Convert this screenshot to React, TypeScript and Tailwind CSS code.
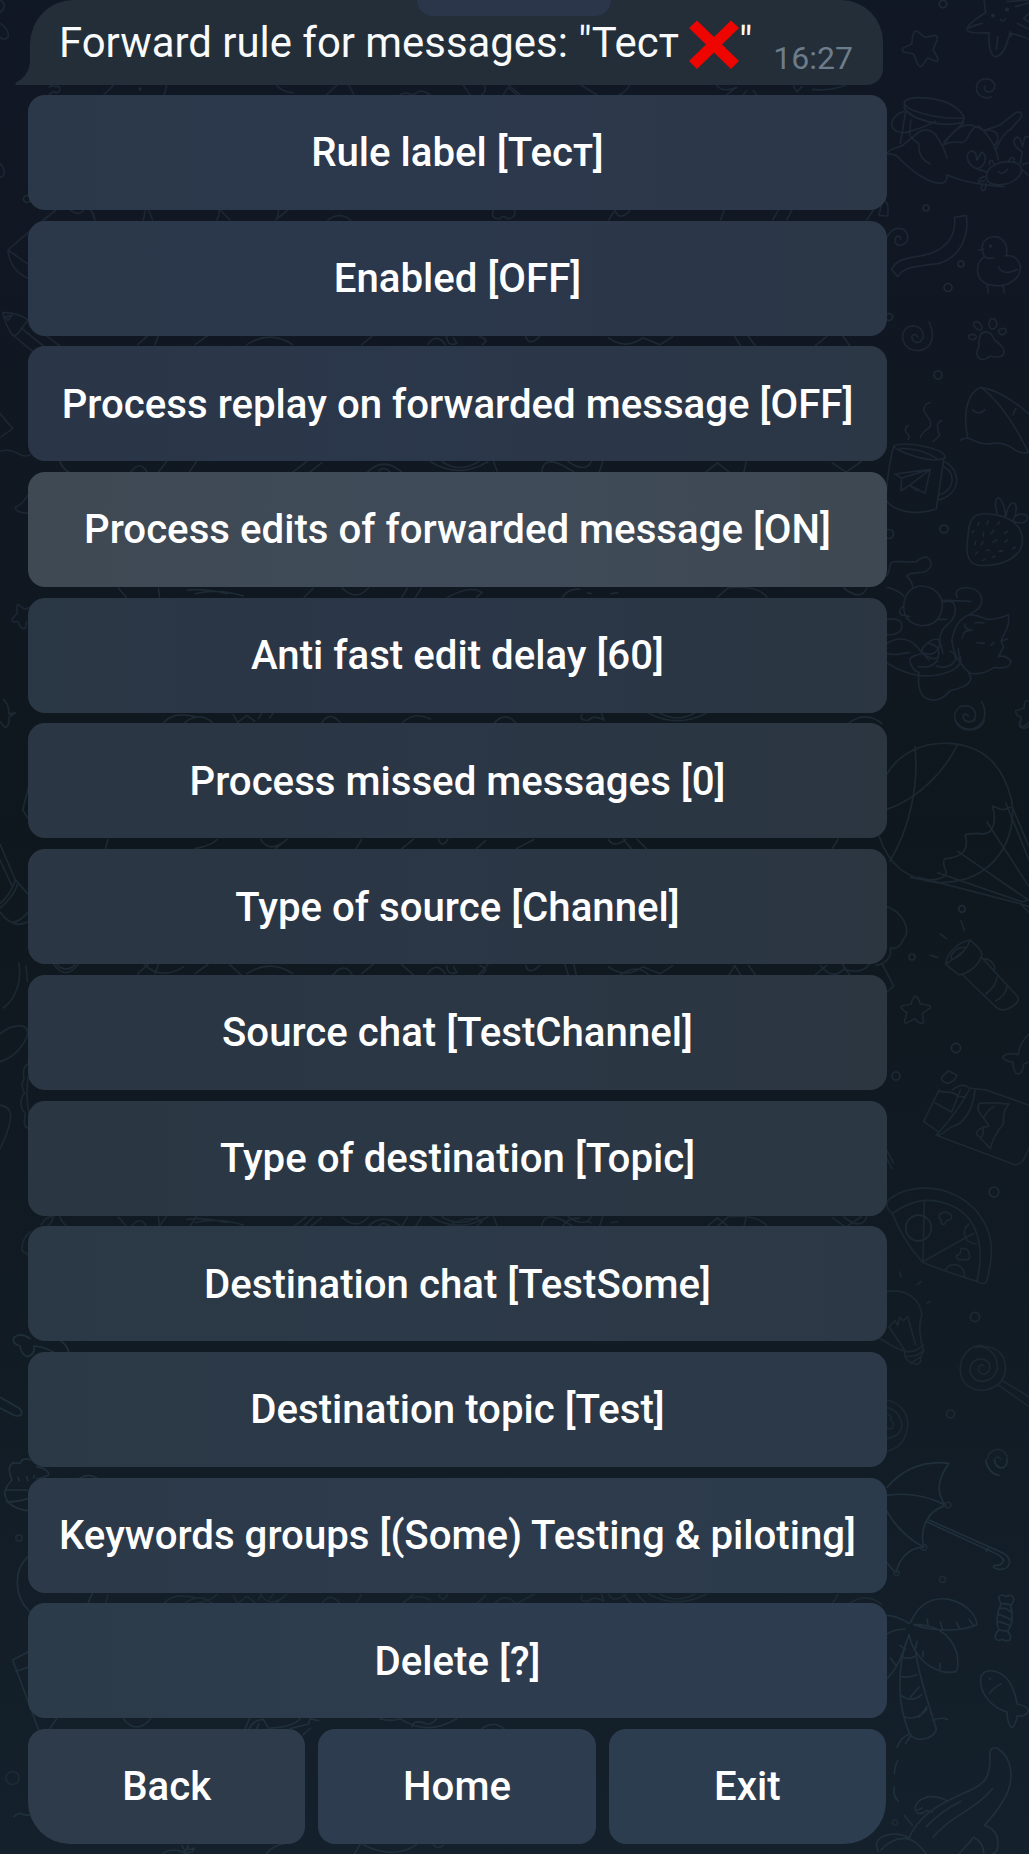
import React from 'react';

type Row = { label: string; tone: string };

const rows: Row[] = [
  { label: 'Rule label [Тест]', tone: 'bg-linear-to-r from-[#2b384a] via-[#2c384c] to-[#2c3748]' },
  { label: 'Enabled [OFF]', tone: 'bg-linear-to-r from-[#2b384a] via-[#2b374b] to-[#2b3646]' },
  { label: 'Process replay on forwarded message [OFF]', tone: 'bg-linear-to-r from-[#2a3648] via-[#2b374a] to-[#2b3745]' },
  { label: 'Process edits of forwarded message [ON]', tone: 'bg-linear-to-r from-[#3e4953] via-[#404b5a] to-[#3e4852]' },
  { label: 'Anti fast edit delay [60]', tone: 'bg-linear-to-r from-[#2a3744] via-[#2b3648] to-[#2b3642]' },
  { label: 'Process missed messages [0]', tone: 'bg-linear-to-r from-[#2a3643] via-[#2b3646] to-[#2b3641]' },
  { label: 'Type of source [Channel]', tone: 'bg-linear-to-r from-[#2a3643] via-[#2b3646] to-[#2b3641]' },
  { label: 'Source chat [TestChannel]', tone: 'bg-linear-to-r from-[#2a3644] via-[#2b3745] to-[#2b3641]' },
  { label: 'Type of destination [Topic]', tone: 'bg-linear-to-r from-[#2a3743] via-[#2b3745] to-[#2b3742]' },
  { label: 'Destination chat [TestSome]', tone: 'bg-linear-to-r from-[#2b3845] via-[#2c3948] to-[#2c3845]' },
  { label: 'Destination topic [Test]', tone: 'bg-linear-to-r from-[#2b3947] via-[#2c3948] to-[#2c3948]' },
  { label: 'Keywords groups [(Some) Testing & piloting]', tone: 'bg-linear-to-r from-[#2b3948] via-[#2d3b4d] to-[#2c3b4b]' },
  { label: 'Delete [?]', tone: 'bg-linear-to-r from-[#2c3b49] via-[#2d3d4f] to-[#2d3d4f]' },
];

const footer: Row[] = [
  { label: 'Back', tone: 'rounded-bl-[42px] bg-[#2d3b4a]' },
  { label: 'Home', tone: 'bg-[#2d3c4f]' },
  { label: 'Exit', tone: 'rounded-br-[42px] bg-[#2d3d50]' },
];

/* Wallpaper doodles, right margin, from top to bottom */
const shore = [
  'M345 0L350 38Q290 75 294 90Q298 102 360 98C358 150 368 170 381 170C396 168 412 145 422 100Q455 105 480 118M415 5L480 0M440 20L480 8M480 40L464 55L480 66M445 70L480 88M298 84Q318 75 340 70M386 110L382 148M424 95L426 110M394 58Q402 70 410 56',
  'M148 96Q136 88 132 104L128 132L104 143Q96 149 104 156L134 162L146 192Q152 206 160 196L176 174L200 184Q210 184 206 174L192 148L204 122Q208 106 196 106L168 112Z',
  'M368 290Q342 300 326 280Q314 250 340 238Q370 232 378 256Q376 276 356 276Q342 270 348 258',
  'M106 304C130 284 220 292 262 324Q300 356 276 368C220 384 125 358 106 324ZM106 304Q104 318 130 330C190 354 250 356 284 354M106 334C60 345 50 400 110 398Q160 385 200 364M110 335L94 430M125 360L122 405M284 368L224 426',
  'M54 460Q60 448 98 438L150 396Q175 380 200 404Q225 440 234 474M56 462Q80 460 96 480C135 520 180 548 215 550Q236 548 234 524C280 545 340 555 404 560M124 410L150 432Q146 475 184 492M224 434Q245 422 278 428C304 424 294 384 330 378Q380 425 388 480M224 434Q258 380 290 376Q315 372 344 392L392 376L440 338Q460 330 458 350L425 388Q402 400 382 445M344 392Q380 386 386 408Q388 428 374 438',
  'M352 526C356 496 400 478 440 488Q462 496 456 520C438 552 390 562 362 548Q350 540 352 526ZM388 514Q400 528 416 508M352 516L322 506Q290 490 296 462Q306 446 320 460L324 480L338 456Q352 462 348 484Q342 502 324 506M362 494Q358 480 370 482L376 494M418 486Q424 464 436 478L434 488M346 530Q328 536 330 546L346 542M342 552Q332 566 342 572Q352 570 350 550M454 490L460 456Q430 438 436 418Q446 402 456 424L460 440L468 410L480 410M460 494L480 488M460 510L480 528',
  'M30 646L40 602Q62 600 56 648ZM54 712Q70 676 104 688Q124 706 112 726Q100 740 84 734Q70 720 86 708Q98 708 94 718',
  'M256 652L292 646C300 700 280 770 210 790C140 800 105 798 86 830L68 808C90 760 160 780 206 750C246 730 262 690 256 652',
  'M344 764Q330 730 358 714C390 700 420 724 412 766M346 770C318 790 316 840 358 854C410 866 456 840 454 800Q446 762 408 768M346 768Q352 778 376 774M388 800Q404 830 446 808M344 748L328 750M354 854L358 878M402 856L406 878',
  'M180 966C200 1010 190 1048 148 1052C100 1050 86 1000 118 980C158 968 176 1010 152 1026Q130 1032 128 1010Q136 996 146 1010',
  'M336 1002C350 990 366 994 376 1020Q420 1050 398 1068Q384 1074 364 1068Q340 1088 326 1070Q320 1056 330 1040Q328 1016 336 1002ZM316 966Q332 960 340 984Q334 996 322 986Q310 974 316 966ZM366 956Q382 954 384 972Q380 990 366 986Q354 972 366 956ZM390 990Q408 978 412 994Q406 1006 396 1004Q386 998 390 990ZM300 1006Q316 998 322 1010Q318 1022 306 1018Q296 1012 300 1006Z',
];

const kitchen = [
  'M74 258Q100 246 160 258C210 268 230 280 228 294Q200 306 148 292C110 280 80 270 74 258ZM94 266Q150 262 204 296M74 260Q56 320 50 430M50 420C80 460 150 466 202 446L224 300M228 306C276 330 280 400 208 420M224 320C262 340 256 390 212 404',
  'M78 342L184 328L168 400L122 376L96 392L98 354ZM184 328L98 354M184 328L122 376L144 392',
  'M118 238Q124 226 112 218Q104 204 118 196M154 232Q158 218 182 202C196 180 160 160 164 146Q170 128 184 128M192 244Q204 236 212 226Q204 212 206 192Q210 184 218 182',
  'M296 232C280 160 296 96 336 82Q400 92 480 162M274 240Q290 230 306 238Q340 256 372 250Q408 246 438 270Q460 284 480 276M336 82C400 130 450 220 476 272M310 148Q328 170 348 148M440 146L432 164',
  'M298 520C300 460 330 456 378 464C430 474 462 500 460 546C458 590 400 620 330 616C290 610 290 570 298 520ZM386 464C374 430 380 412 390 414Q408 430 410 474C416 430 432 422 440 434Q446 456 432 482Q440 456 470 464Q484 480 462 488Q444 490 432 482',
  'M326 496L330 488M354 492L358 482M386 492L392 486M310 518L314 512M342 528L344 518M366 520L374 512M406 520L416 514M318 554L320 544M336 554L342 546M372 546L384 540M408 546L416 540M320 582L326 576M352 572L362 570M390 574L402 572M430 566L440 562M340 602L348 598M370 592L378 588',
  'M54 648C70 620 50 604 90 604Q130 608 144 604Q160 588 174 592C196 606 188 636 150 638Q120 640 112 648Q128 660 132 682M54 682Q90 690 104 708M104 738Q106 690 150 678C200 676 222 710 220 740C214 790 180 800 152 796C120 790 104 770 104 738ZM104 738Q84 750 96 764L122 770M218 720L306 724M218 728Q264 710 258 760C250 800 214 790 212 840L222 880M208 778L234 778M264 712Q254 690 280 684C340 676 354 730 320 752L300 764',
  'M248 844Q258 780 300 764Q330 766 352 778Q380 780 418 764C424 800 408 810 396 844L416 836M396 844L404 860Q394 880 388 890M250 844Q254 900 304 940Q340 946 376 922Q420 930 426 904Q410 884 388 890M268 866Q270 900 280 916M286 792Q290 812 310 810M280 834Q282 812 300 812M318 788L344 788M324 848L346 850M366 856L374 848',
  'M54 778C90 772 104 784 96 810Q84 826 54 824M54 850C90 828 120 836 144 860Q160 880 180 900M54 880C80 890 100 878 122 878M122 900Q126 884 170 880C190 890 220 870 210 840C190 830 160 860 158 874Q180 902 206 894Q220 860 180 850M54 910C120 950 180 960 248 932Q280 916 274 890M122 900Q128 930 150 938Q144 980 160 1006C190 1032 220 1020 244 992Q300 980 306 956L300 940M148 920Q190 926 206 900M202 918Q240 930 260 900Q260 880 244 874',
  'M338 1024C358 1060 346 1100 306 1108C254 1104 244 1060 274 1040C310 1030 332 1060 312 1082Q288 1092 282 1070Q288 1056 298 1068M480 1024Q464 1016 466 1044L440 1052Q440 1066 456 1072L452 1100Q470 1110 480 1096',
];

const balloon = [
  'M258 0Q268 30 304 30Q340 26 346 0M286 0Q300 12 318 0M456 0Q444 20 462 20Q470 16 480 6',
  'M54 162C90 100 160 66 240 70C340 76 400 130 428 240C446 350 380 490 208 488C120 480 60 440 30 348M138 80C150 200 120 330 62 424M266 72C230 150 150 236 54 268',
  'M424 262C400 276 388 264 370 258C386 310 370 350 330 340Q280 340 290 350C302 400 264 414 228 416Q218 424 232 456Q228 482 166 480L124 472M410 248L480 420M430 262L480 380M354 306L480 500M266 394L478 540M206 458L460 546L480 538M148 472L456 552L480 578M456 552L480 560',
  'M54 560C100 576 130 630 102 660Q90 690 64 684C70 710 50 732 20 736M40 732L74 798L54 816',
  'M230 732C232 700 270 664 304 660C328 684 340 692 338 706C330 740 290 764 268 764ZM248 718C240 700 272 676 290 684Q280 706 248 720M302 660Q300 690 230 732M280 764L384 864Q406 880 440 852Q454 840 444 828L338 712M342 716Q370 716 378 744L372 752M384 772Q380 800 350 822M414 798Q410 828 380 842M276 602L286 632M214 642L232 656M184 706L206 712',
  'M140 828Q132 830 126 852L98 858Q92 866 114 878L106 904Q108 916 136 896Q158 918 164 906L160 880L184 864Q188 854 154 852Q148 832 140 828Z',
  'M480 942Q450 970 448 1004Q416 996 402 1010Q400 1020 432 1028Q434 1060 446 1062Q462 1060 464 1032L480 1026M218 1072L238 1052L264 1066Q256 1086 234 1090Q216 1084 218 1072ZM250 1110Q280 1086 300 1104L352 1110',
];

const pizza = [
  'M210 0L164 94L206 124M202 136L438 224Q458 224 466 204L480 174M318 0Q312 60 282 90C270 110 250 104 234 120Q214 138 202 136M300 0Q270 60 202 136M210 4L250 8Q270 20 290 22M198 38L248 66L274 0M352 0L480 46M330 40Q360 36 420 42Q400 60 404 100Q372 140 364 176Q350 160 322 132Q324 114 360 108L342 82Q320 60 330 40ZM340 112Q348 130 334 146M344 82Q356 60 374 50',
  'M54 334C110 284 230 270 320 360C370 420 380 480 352 576Q340 586 324 574C350 460 320 380 250 348C190 320 130 326 70 370Q50 356 54 334ZM70 370Q100 450 160 516Q220 542 324 574M166 330L162 516M160 516L314 430M300 402C276 420 284 460 322 462M228 542C240 512 290 520 286 560',
  'M212 372Q234 358 248 378Q248 392 234 390Q226 410 216 400Q220 388 210 384ZM276 476Q300 470 302 500Q300 514 286 508Q260 514 262 496Q276 496 276 476ZM54 182L74 220M54 206L68 236',
  'M54 604C110 596 156 626 158 676Q144 720 164 782Q150 810 156 814Q146 828 132 820C110 814 106 800 106 784Q70 770 30 744M106 784Q140 790 162 764M108 798Q140 804 164 782M60 710L108 782M60 710L78 692L86 706L92 682L104 692L116 680L140 764M92 546L96 560M156 574L146 584M184 634L174 640M126 820L156 800',
  'M340 766C300 766 270 800 274 846C280 890 320 906 350 900C400 890 420 850 404 804C390 776 360 764 320 772C360 764 390 800 384 840C370 880 320 886 304 850C296 810 340 794 360 818C370 850 340 862 328 842Q328 820 344 826M400 872L480 920M390 886L480 950M54 930C100 940 124 980 114 1020C106 1060 80 1078 54 1084M54 952C86 960 102 990 98 1014Q90 1040 54 1046M54 972Q72 976 64 990Q80 1000 68 1016L54 1016M354 1110Q358 1080 388 1078Q414 1082 416 1110M376 1110Q384 1092 396 1108',
];

const palm = [
  'M350 0Q358 40 390 46M376 0Q380 24 400 24Q416 18 414 0M54 82C100 30 160 0 240 10C204 60 200 100 230 136C180 150 150 200 164 262C120 260 88 300 82 338Q66 326 54 308M54 106C110 98 170 104 230 136M54 154Q90 220 164 262M180 180L400 278C430 290 430 330 390 328Q366 324 376 316Q400 318 404 300Q400 288 362 272L174 186M358 266L352 274',
  'M124 488C150 430 190 410 240 418C290 430 320 460 324 494C260 520 180 510 134 494C190 494 240 510 264 580Q270 620 262 634C220 646 170 620 144 580Q128 560 120 524C90 620 70 640 54 656M120 490Q80 466 54 466M108 508Q80 506 54 522M120 524C80 620 86 740 122 822Q140 846 176 834Q200 824 202 806C180 740 150 650 138 566M102 592Q120 598 136 590M98 650Q120 654 144 644M96 706Q130 730 158 704M106 770Q140 784 174 748M150 680L124 712M174 740L150 772M192 782Q210 770 236 778M122 822Q96 830 84 862M126 826L110 850M174 478L178 498M214 486L220 506M262 486L272 506M300 478L312 494M144 544L140 562M162 574L162 590M212 610L214 626M92 556L110 568M64 594L82 618',
  'M390 410Q398 400 410 410Q430 400 434 416Q434 430 424 436L428 450Q434 490 416 514Q430 530 422 540Q410 546 402 538Q384 546 378 534Q380 516 390 510C380 490 384 460 396 430Q388 420 390 410ZM396 430L424 434M392 446Q410 440 428 458M386 464Q400 464 430 482M384 484Q400 486 424 498M390 510L416 514',
  'M336 650C350 620 400 630 424 670Q440 700 444 732Q470 736 478 750Q476 770 444 768Q440 800 428 802Q416 796 414 756C370 744 328 700 336 650ZM362 700Q376 680 396 672',
  'M88 1024Q70 1006 76 980M76 940Q78 916 86 902M106 1066L130 1096M118 1138C150 1060 220 1030 274 1004C330 980 370 970 362 880Q366 860 384 864C430 890 440 960 404 1020Q380 1060 346 1096Q392 1110 386 1160Q384 1180 370 1182M236 1024Q210 1008 178 1010C140 1020 130 1046 146 1060Q160 1064 172 1052L190 1056M146 1050L160 1044M172 1100Q220 1050 276 1024M192 1132C240 1070 320 1050 370 986M28 1174Q10 1140 50 1126Q90 1116 120 1134M36 1170Q70 1130 120 1136Q150 1150 172 1182M270 1182L314 1132Q346 1150 344 1182M314 1132L300 1150',
];

/* Left margin and the slivers that show between rows */
const leftTop = [
  'M24 150L60 118L168 30M24 150Q30 210 82 234M24 150L86 194M270 30Q284 40 284 60M8 338Q50 336 84 360L66 384Q50 410 38 406Q18 380 8 338ZM16 350L36 346L24 362ZM40 406L100 456M64 384L130 438M134 404L180 438M0 640L38 686L4 710M0 754Q30 744 60 764Q80 772 90 764M180 784Q190 806 206 818M84 884Q70 912 46 922Q44 936 82 940M56 1214Q48 1212 52 1240L36 1256Q34 1270 54 1264Q64 1292 76 1284L80 1264M56 1214L74 1228L90 1222',
];
const leftMiddle = [
  'M10 24Q28 36 26 60L46 58L28 68Q28 94 14 94L0 80M84 250L68 304L84 324M0 390L46 480L84 516M0 430L36 496M46 480Q30 520 0 540M54 490Q40 524 0 552M0 562Q40 606 84 586M36 588Q60 586 84 562M56 690C66 730 50 780 10 804M78 698L82 736M0 870C30 846 84 840 84 868C74 900 40 930 0 940M0 1050Q34 1054 32 1080Q26 1120 0 1160M84 946Q66 952 72 984Q60 1000 74 1020Q58 1034 66 1060Q80 1072 74 1084Q70 1104 84 1108M84 980Q76 1040 90 1080M90 1370Q60 1394 68 1420L84 1428M124 1352Q140 1330 160 1332Q150 1360 134 1358',
];
const leftBottom = [
  'M90 116Q64 96 42 112Q34 130 60 138Q64 166 84 170Q106 162 102 138Q130 140 160 156M168 114Q200 130 206 156M0 292L50 320Q70 330 64 344Q54 352 40 344L0 324M84 632Q20 624 14 580Q16 560 36 540Q18 500 40 488L60 490Q70 470 90 480M20 570L84 570M20 606Q50 606 84 596M54 532L58 542M80 530L84 542M100 534L104 526M110 500Q150 510 146 524Q130 536 110 536M240 534Q266 520 290 534M84 770C40 810 40 890 90 936M278 878L264 910M38 1080L84 1056M38 1080L116 1290M48 1114L84 1102M146 1290L170 1256M42 1550Q56 1534 70 1544L90 1546',
];
const slivers = [
  'M148 262Q150 254 166 260Q184 256 178 274Q170 282 160 274L148 284M312 284L340 256M500 256Q496 274 492 284M830 256Q850 278 880 278M980 284L1010 256M1046 256L1062 284M1200 284Q1220 274 1240 286Q1260 262 1290 284M1390 256L1410 284M1454 256Q1460 274 1446 284M1510 284L1524 262L1550 284M1527 256L1560 284M1744 256L1790 284M1888 256Q1880 274 1858 284M2150 256Q2170 280 2210 262L2180 284M2230 284L2240 272M2260 272L2270 284M2380 256L2390 276L2406 260M2438 268Q2490 274 2536 256',
  'M130 660L168 630M210 630Q240 650 250 630M274 630L284 660M430 660L436 630M446 630L458 660M656 630Q660 646 650 660M660 630L690 660M826 660L864 630M836 630L832 654M984 660Q1018 634 1052 660M1480 630Q1470 658 1500 656Q1510 642 1522 656Q1550 654 1544 630M1826 660Q1850 620 1846 634Q1860 664 1890 632M2172 630L2162 660M2318 660L2336 630M2360 660L2376 630M2620 630L2600 660',
];
const gaps = [
  'M240 252L258 236M270 252L276 236M340 252L362 236M430 252Q470 226 510 252M630 252L650 236M745 252Q760 230 776 252M778 238Q780 256 796 250L790 240M836 238Q854 244 840 252M916 238Q922 256 940 238M1060 240Q1090 262 1120 240L1150 252L1172 238M1280 238L1290 254M1304 238L1316 254M1420 254L1440 238M1468 236L1480 254',
  'M104 456Q110 470 120 474M228 474Q244 452 256 474M276 474L290 456M330 474L342 456M510 474L534 456M540 474L560 458M640 474Q668 446 700 474M660 472Q668 462 680 474M750 456Q800 486 850 456M770 456Q800 476 834 456M860 456L866 472M944 474Q946 446 980 462L1000 474M990 456Q1020 476 1030 456M1050 456L1044 474M1230 474L1250 458L1270 474M1300 456L1296 474M1450 458L1474 474L1500 456',
  'M206 676L220 692M276 676L278 692M326 680Q350 676 396 686M340 686Q380 676 424 690M530 692L546 676M596 676Q620 700 642 676M700 692L710 676M724 692L734 676M780 692Q820 670 840 684L830 692M980 692Q990 676 1010 678M1024 684L1030 686M1064 686L1076 684M1250 692L1268 676Q1320 670 1336 692M1470 676Q1500 700 1510 676',
  'M284 912Q300 890 340 900M320 912Q346 890 370 910M406 896L414 910L430 898L444 908M450 904L456 894M470 902L476 894M560 912Q574 888 592 910M700 912Q720 890 750 904M860 912Q880 890 898 910M1014 896Q1008 908 1026 906Q1034 896 1052 906L1048 894M1130 894Q1180 920 1230 894M1150 894Q1180 910 1210 894M1480 910Q1510 890 1536 912',
  'M188 1114L184 1130M340 1130Q370 1124 378 1114M454 1114Q470 1140 500 1114M480 1130L500 1114M620 1130L630 1114M700 1130L720 1114M764 1114Q770 1130 780 1114M830 1130L846 1116M900 1130L930 1114M1060 1114Q1070 1130 1090 1114M1086 1114L1100 1130M1110 1114L1126 1130M1450 1130L1460 1114',
  'M94 1332Q114 1360 136 1332M252 1332Q280 1360 320 1336M400 1332L420 1350M580 1350Q600 1326 614 1350M700 1332L720 1350M834 1350L850 1332M984 1332L990 1350M1000 1332L1004 1350M1080 1350Q1110 1330 1130 1350M1270 1350L1280 1334M1430 1334Q1450 1360 1470 1340Q1500 1350 1514 1332',
];

const Doodles = ({ paths, transform }: { paths: string[]; transform: string }) => (
  <g transform={transform}>
    {paths.map((d) => (
      <path key={d} d={d} />
    ))}
  </g>
);

const bubbles: [number, number, number][] = [
  [943, 4, 3.8], [926, 208, 3], [961, 264, 3], [948, 287.5, 4], [889, 317, 3.5], [938, 375, 4], [944, 529, 4], [889, 534, 4.5],
  [962, 909, 3.3], [912, 957, 3], [956, 1048, 4.6], [896, 1076, 4], [994, 1192, 4.8], [975, 1317, 4.6], [950.5, 1414, 4],
  [918.5, 1228, 12.8], [948, 1505, 2.8], [924, 1547.5, 2.8], [896.5, 1573, 2.6], [942.5, 1579.5, 3], [895, 1822.5, 2.6],
  [12.5, 1778, 6.5], [19, 1538, 3.2], [27, 199, 3.5], [66, 958, 11], [990.5, 246, 0.8], [990, 1679, 0.8], [140, 89, 0.8],
  [993, 15.5, 1.2], [1007, 9.5, 1.2],
];

const Wallpaper = () => (
  <svg className="absolute inset-0 h-full w-full" viewBox="0 0 1029 1854" fill="none" strokeLinecap="round" strokeLinejoin="round" aria-hidden="true">
    {/* Ink layers brighten slightly towards the bottom of the chat */}
    <g strokeWidth="5">
      <g stroke="#1c2733">
        <Doodles paths={shore} transform="translate(869 0) scale(.33333)" />
        <Doodles paths={kitchen} transform="translate(869 360) scale(.33333)" />
        <Doodles paths={leftTop} transform="translate(0 200) scale(.33333)" />
        <Doodles paths={slivers} transform="scale(.33333)" />
        <path d="M0 0Q20 10 8 30L0 38M0 70Q30 90 24 112Q12 122 0 112M0 490Q20 510 8 530L0 532" transform="scale(.33333)" />
      </g>
      <g stroke="#1c2831">
        <Doodles paths={balloon} transform="translate(869 720) scale(.33333)" />
        <Doodles paths={pizza} transform="translate(869 1090) scale(.33333)" />
        <Doodles paths={leftMiddle} transform="translate(0 690) scale(.33333 .3954)" />
      </g>
      <g stroke="#20303b">
        <Doodles paths={palm} transform="translate(869 1460) scale(.33333)" />
        <Doodles paths={leftBottom} transform="translate(0 1300) scale(.33333)" />
        <path d="M736 86L748 56M748 86Q760 60 790 58L806 86M770 86L776 72M370 56Q410 106 452 56M810 84Q880 80 900 56M870 86L926 72L930 56L956 62M910 104L932 84M1140 56Q1170 66 1200 56Q1280 110 1370 56M1236 80Q1240 60 1270 68Q1290 80 1310 56M1446 86Q1480 60 1512 86M488 460Q520 440 556 460M546 436L556 456L564 436L566 450L584 444L576 456L560 460M800 460Q820 436 850 432M1064 460L1080 434M1090 434Q1180 480 1250 434M1300 434Q1310 450 1330 436" transform="translate(0 1700) scale(.33333)" />
      </g>
    </g>
    <g strokeWidth="2.9" stroke="#1d2933">
      <Doodles paths={gaps} transform="translate(0 200) scale(.574)" />
      <Doodles paths={[gaps[0], gaps[2]]} transform="translate(0 829) scale(.574)" />
      <Doodles paths={[gaps[1], gaps[4]]} transform="translate(0 955) scale(.574)" />
      <Doodles paths={[gaps[3]]} transform="translate(0 1081) scale(.574)" />
    </g>
    <g strokeWidth="1.7" stroke="#1d2a34">
      {bubbles.map(([cx, cy, r]) => (
        <circle key={`${cx}-${cy}`} cx={cx} cy={cy} r={r} />
      ))}
    </g>
  </svg>
);

const Key = ({ label, tone }: Row) => (
  <button
    type="button"
    className={`flex h-[115px] items-center justify-center rounded-[17px] pt-[2px] text-[40.2px] leading-none font-medium whitespace-nowrap text-white ${tone}`}
  >
    {label}
  </button>
);

export default function App() {
  return (
    <div className="relative h-[1854px] w-[1029px] overflow-hidden bg-linear-to-b from-[#111825] via-[#0f171e] via-45% to-[#14202b] font-['Roboto',sans-serif]">
      <Wallpaper />
      <main className="relative ml-[28px] w-[859px]">
        <div className="relative ml-[2px] flex h-[85px] w-[853px] rounded-tl-[44px] rounded-tr-[42px] rounded-br-[16px] bg-[#232e39] pl-[29px]">
          <svg className="absolute bottom-0 -left-[15px] h-[24px] w-[16px]" viewBox="0 0 16 24" fill="#232e39" aria-hidden="true">
            <path d="M16 0H15Q14 15 1 21.500Q-1 24 3 24H16Z" />
          </svg>
          <div className="absolute top-0 left-[387px] h-[16px] w-[194px] rounded-b-[26px] bg-[#2b364a]" />
          <p className="relative flex h-[86px] items-center text-[41.9px] leading-none whitespace-nowrap text-[#f8fafb]">
            <span>Forward rule for messages: &quot;Тест</span>
            <svg className="mt-[3px] ml-[10px] h-[50px] w-[50px]" viewBox="0 0 50 50" role="img" aria-label="cross mark">
              <path d="M8 .5L25 17L42 .5L50 8L33 24.500L50 41L42 49L25 32.500L8 49L0 41L17 24.500L0 8Z" fill="#ee0500" />
            </svg>
            <span>&quot;</span>
          </p>
          <time className="relative mt-[42px] ml-[21px] text-[32px] leading-none text-[#6d7c8a]">16:27</time>
        </div>
        <div className="mt-[10px] flex flex-col gap-[10.7px]">
          {rows.map((row) => (
            <Key key={row.label} {...row} />
          ))}
          <div className="grid w-[858px] grid-cols-3 gap-[13px]">
            {footer.map((row) => (
              <Key key={row.label} {...row} />
            ))}
          </div>
        </div>
      </main>
    </div>
  );
}
